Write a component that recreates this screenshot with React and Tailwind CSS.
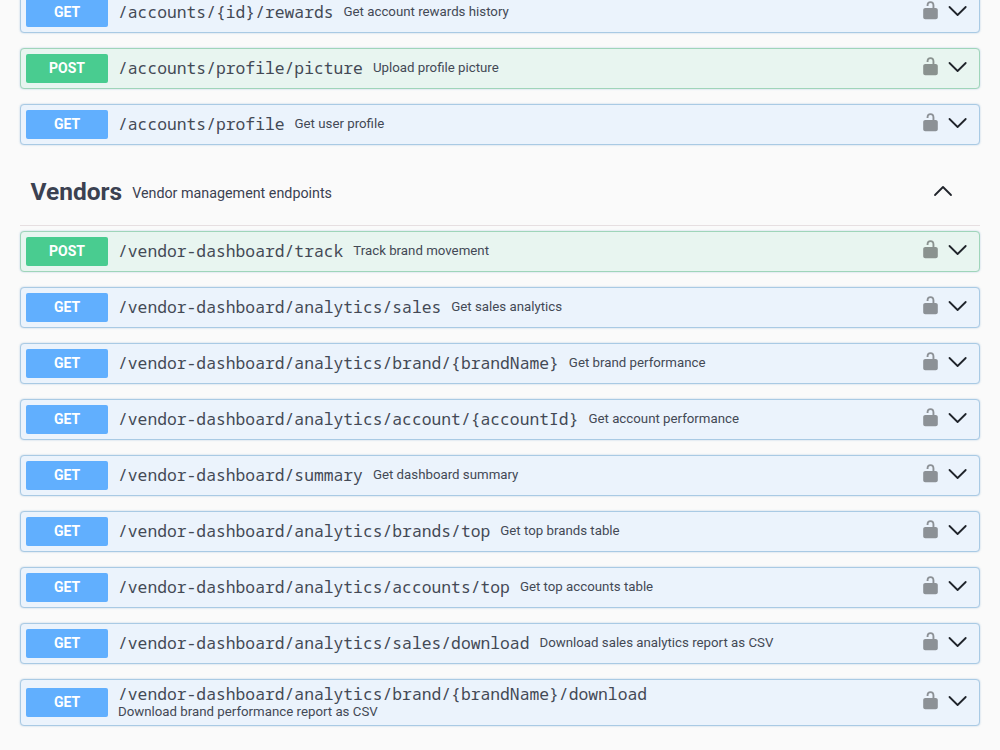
const accountRows = [
  { method: 'GET', path: '/accounts/{id}/rewards', summary: 'Get account rewards history' },
  { method: 'POST', path: '/accounts/profile/picture', summary: 'Upload profile picture' },
  { method: 'GET', path: '/accounts/profile', summary: 'Get user profile' },
];

const vendorRows = [
  { method: 'POST', path: '/vendor-dashboard/track', summary: 'Track brand movement' },
  { method: 'GET', path: '/vendor-dashboard/analytics/sales', summary: 'Get sales analytics' },
  { method: 'GET', path: '/vendor-dashboard/analytics/brand/{brandName}', summary: 'Get brand performance' },
  { method: 'GET', path: '/vendor-dashboard/analytics/account/{accountId}', summary: 'Get account performance' },
  { method: 'GET', path: '/vendor-dashboard/summary', summary: 'Get dashboard summary' },
  { method: 'GET', path: '/vendor-dashboard/analytics/brands/top', summary: 'Get top brands table' },
  { method: 'GET', path: '/vendor-dashboard/analytics/accounts/top', summary: 'Get top accounts table' },
  { method: 'GET', path: '/vendor-dashboard/analytics/sales/download', summary: 'Download sales analytics report as CSV' },
  { method: 'GET', path: '/vendor-dashboard/analytics/brand/{brandName}/download', summary: 'Download brand performance report as CSV', stacked: true },
];

function UnlockIcon() {
  return (
    <svg viewBox="0 0 20 20" className="mb-[2px] h-5 w-5 fill-black opacity-40" aria-hidden="true">
      <path d="M14.700 8H13.400V5.400C13.400 2.800 12 1.200 9.500 1.200 7 1.200 5.600 2.800 5.600 5.400V6h1.900v-.7C7.500 3.900 8.300 3.100 9.500 3.100s2 .8 2 2.200V8H4.300C3.100 8 2.200 8.900 2.200 10v7.200c0 1.100.9 2 2.100 2h10.400c1.200 0 2.100-.9 2.100-2V10c0-1.100-.9-2-2.100-2z" />
    </svg>
  );
}

function Chevron({ up }) {
  return (
    <svg viewBox="0 0 20 12" className="h-3 w-5 fill-none stroke-[#20242b]" strokeWidth="1.8" strokeLinecap="round" strokeLinejoin="round" aria-hidden="true">
      <path d={up ? 'M2 10 10 2l8 8' : 'M1.500 2l8.100 8 8.100-8'} />
    </svg>
  );
}

function Operation({ method, path, summary, stacked }) {
  const post = method === 'POST';
  return (
    <div
      className={`flex shrink-0 items-center rounded-[4px] border pl-[5px] pr-[11px] shadow-[0_0_2px_rgba(80,140,190,0.4)] ${stacked ? 'h-[47px]' : 'h-[41px]'} ${post ? 'border-[#9fd5ba] bg-[#e8f5f0]' : 'border-[#a9cae4] bg-[#ebf3fc]'}`}
    >
      <span
        className={`mb-px flex h-[29px] w-[82px] shrink-0 items-center justify-center rounded-[2px] text-[14px] font-bold text-white ${post ? 'bg-[#49cc90]' : 'bg-[#61affe]'}`}
      >
        {method}
      </span>
      <div className={`flex grow whitespace-nowrap pb-[2px] pl-[10px] text-[#434955] ${stacked ? 'flex-col' : 'items-center gap-[10px]'}`}>
        <span className="font-['Noto_Sans_Mono','Droid_Sans_Mono','Liberation_Mono',monospace] text-[16.34px] leading-[20px]">{path}</span>
        <span className={`text-[13.27px] ${stacked ? 'leading-[16px]' : 'pt-px leading-[20px]'}`}>{summary}</span>
      </div>
      <div className="mb-[4px] flex items-center gap-[7px]">
        <UnlockIcon />
        <Chevron />
      </div>
    </div>
  );
}

export default function App() {
  return (
    <main className="h-[750px] overflow-hidden bg-[#fafafa] px-5 font-['Roboto',sans-serif]">
      <section className="-mt-2 flex flex-col gap-[15px]">
        {accountRows.map((row) => (
          <Operation key={row.path} {...row} />
        ))}
      </section>
      <section>
        <header className="mt-[15px] mb-[5px] flex h-[66px] items-center border-b border-[#e6dfe1] pr-[27px] pl-[10.5px] text-[#3b4151]">
          <h2 className="mb-[2px] text-[24.5px] leading-8 font-bold">Vendors</h2>
          <p className="grow pt-[2px] pl-[10px] text-[14.3px]">Vendor management endpoints</p>
          <div className="mb-1">
            <Chevron up />
          </div>
        </header>
        <div className="flex flex-col gap-[15px]">
          {vendorRows.map((row) => (
            <Operation key={row.path} {...row} />
          ))}
        </div>
      </section>
    </main>
  );
}
